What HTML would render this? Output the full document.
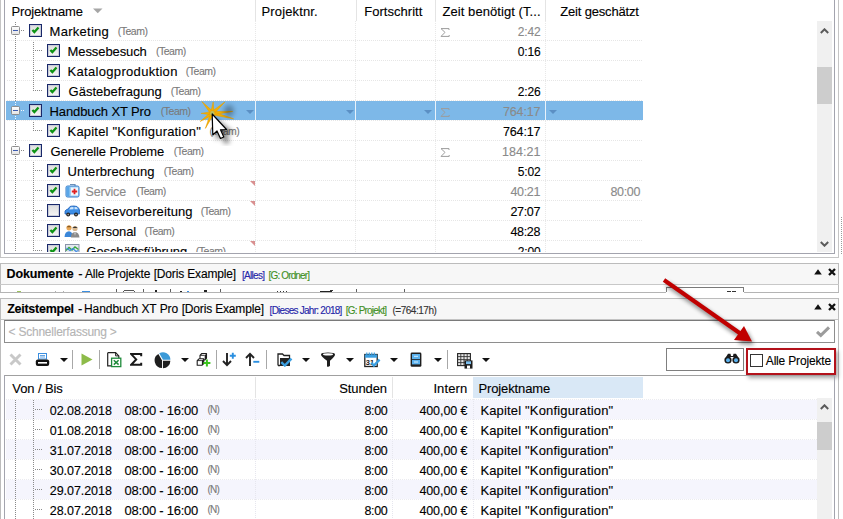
<!DOCTYPE html><html><head><meta charset="utf-8"><style>

html,body{margin:0;padding:0;background:#fff;}
body{width:843px;height:519px;overflow:hidden;position:relative;font-family:"Liberation Sans",sans-serif;}
.a{position:absolute;}
.t{position:absolute;white-space:pre;font-family:"Liberation Sans",sans-serif;color:#000;-webkit-text-stroke:0.12px currentColor;}
.cb{width:11px;height:11px;border:1px solid #19286a;background:linear-gradient(#dcdcdc,#f6f6f6);box-shadow:inset 0 0 0 1px #c9cdd8;}
.cb svg{left:-1px;top:-1px;}
.ex{width:7px;height:7px;border:1px solid #8e8e8e;border-radius:1.5px;background:linear-gradient(#fdfdfd,#e4e4e4);}

</style></head><body>
<div class="a" style="left:0;top:0;width:817px;height:252px;overflow:hidden">
<div class="a" style="left:255px;top:0px;width:1px;height:21px;background:#e4e4e4;"></div>
<div class="a" style="left:356px;top:0px;width:1px;height:21px;background:#e4e4e4;"></div>
<div class="a" style="left:435px;top:0px;width:1px;height:21px;background:#e4e4e4;"></div>
<div class="a" style="left:545px;top:0px;width:1px;height:21px;background:#e4e4e4;"></div>
<svg class="a" style="left:93px;top:8px" width="10" height="6" viewBox="0 0 10 6"><path d="M0 0.5 L9.5 0.5 L4.75 5.2 Z" fill="#a6a6a6"/></svg>
<div class="a" style="left:7px;top:40px;width:636px;height:1px;background:repeating-linear-gradient(to right,#e6e6e6 0 1px,transparent 1px 2px);"></div>
<div class="a" style="left:7px;top:60px;width:636px;height:1px;background:repeating-linear-gradient(to right,#e6e6e6 0 1px,transparent 1px 2px);"></div>
<div class="a" style="left:7px;top:80px;width:636px;height:1px;background:repeating-linear-gradient(to right,#e6e6e6 0 1px,transparent 1px 2px);"></div>
<div class="a" style="left:7px;top:100px;width:636px;height:1px;background:repeating-linear-gradient(to right,#e6e6e6 0 1px,transparent 1px 2px);"></div>
<div class="a" style="left:7px;top:120px;width:636px;height:1px;background:repeating-linear-gradient(to right,#e6e6e6 0 1px,transparent 1px 2px);"></div>
<div class="a" style="left:7px;top:140px;width:636px;height:1px;background:repeating-linear-gradient(to right,#e6e6e6 0 1px,transparent 1px 2px);"></div>
<div class="a" style="left:7px;top:160px;width:636px;height:1px;background:repeating-linear-gradient(to right,#e6e6e6 0 1px,transparent 1px 2px);"></div>
<div class="a" style="left:7px;top:180px;width:636px;height:1px;background:repeating-linear-gradient(to right,#e6e6e6 0 1px,transparent 1px 2px);"></div>
<div class="a" style="left:7px;top:200px;width:636px;height:1px;background:repeating-linear-gradient(to right,#e6e6e6 0 1px,transparent 1px 2px);"></div>
<div class="a" style="left:7px;top:220px;width:636px;height:1px;background:repeating-linear-gradient(to right,#e6e6e6 0 1px,transparent 1px 2px);"></div>
<div class="a" style="left:7px;top:240px;width:636px;height:1px;background:repeating-linear-gradient(to right,#e6e6e6 0 1px,transparent 1px 2px);"></div>
<div class="a" style="left:255px;top:21px;width:1px;height:232px;background:repeating-linear-gradient(to bottom,#e8e8e8 0 1px,transparent 1px 2px);"></div>
<div class="a" style="left:355px;top:21px;width:1px;height:232px;background:repeating-linear-gradient(to bottom,#e8e8e8 0 1px,transparent 1px 2px);"></div>
<div class="a" style="left:435px;top:21px;width:1px;height:232px;background:repeating-linear-gradient(to bottom,#e8e8e8 0 1px,transparent 1px 2px);"></div>
<div class="a" style="left:545px;top:21px;width:1px;height:232px;background:repeating-linear-gradient(to bottom,#e8e8e8 0 1px,transparent 1px 2px);"></div>
<div class="a" style="left:6px;top:101px;width:637px;height:19px;background:#7db8e8;"></div>
<div class="a" style="left:255px;top:101px;width:1px;height:19px;background:#e8f2fb;"></div>
<div class="a" style="left:355px;top:101px;width:1px;height:19px;background:#e8f2fb;"></div>
<div class="a" style="left:435px;top:101px;width:1px;height:19px;background:#e8f2fb;"></div>
<div class="a" style="left:545px;top:101px;width:1px;height:19px;background:#e8f2fb;"></div>
<svg class="a" style="left:246px;top:110px" width="8" height="5" viewBox="0 0 8 5"><path d="M0 0 L8 0 L4.0 4 Z" fill="#5b8fc4"/></svg>
<svg class="a" style="left:346px;top:110px" width="8" height="5" viewBox="0 0 8 5"><path d="M0 0 L8 0 L4.0 4 Z" fill="#5b8fc4"/></svg>
<svg class="a" style="left:424px;top:110px" width="8" height="5" viewBox="0 0 8 5"><path d="M0 0 L8 0 L4.0 4 Z" fill="#5b8fc4"/></svg>
<svg class="a" style="left:549px;top:110px" width="8" height="5" viewBox="0 0 8 5"><path d="M0 0 L8 0 L4.0 4 Z" fill="#5b8fc4"/></svg>
<div class="a" style="left:15px;top:22px;width:1px;height:231px;background:repeating-linear-gradient(to bottom,#8a8a8a 0 1px,transparent 1px 2px);"></div>
<div class="a" style="left:33px;top:42px;width:1px;height:49px;background:repeating-linear-gradient(to bottom,#8a8a8a 0 1px,transparent 1px 2px);"></div>
<div class="a" style="left:33px;top:122px;width:1px;height:9px;background:repeating-linear-gradient(to bottom,#8a8a8a 0 1px,transparent 1px 2px);"></div>
<div class="a" style="left:33px;top:162px;width:1px;height:91px;background:repeating-linear-gradient(to bottom,#8a8a8a 0 1px,transparent 1px 2px);"></div>
<div class="a" style="left:21px;top:30px;width:4px;height:1px;background:repeating-linear-gradient(to right,#8a8a8a 0 1px,transparent 1px 2px);"></div>
<div class="a ex" style="left:11px;top:26px;"><div class="a" style="left:1px;top:3px;width:5px;height:1px;background:#3d5cb0"></div></div>
<div class="a cb" style="left:29px;top:24px;"><svg width="13" height="13" viewBox="0 0 13 13" class="a"><path d="M3.4 5.9 L5.4 8.1 L9.5 3.6" fill="none" stroke="#0d9414" stroke-width="2.3" stroke-linecap="butt" stroke-linejoin="miter"/></svg></div>
<div class="a" style="left:35px;top:50px;width:8px;height:1px;background:repeating-linear-gradient(to right,#8a8a8a 0 1px,transparent 1px 2px);"></div>
<div class="a cb" style="left:47px;top:44px;"><svg width="13" height="13" viewBox="0 0 13 13" class="a"><path d="M3.4 5.9 L5.4 8.1 L9.5 3.6" fill="none" stroke="#0d9414" stroke-width="2.3" stroke-linecap="butt" stroke-linejoin="miter"/></svg></div>
<div class="a" style="left:35px;top:70px;width:8px;height:1px;background:repeating-linear-gradient(to right,#8a8a8a 0 1px,transparent 1px 2px);"></div>
<div class="a cb" style="left:47px;top:64px;"><svg width="13" height="13" viewBox="0 0 13 13" class="a"><path d="M3.4 5.9 L5.4 8.1 L9.5 3.6" fill="none" stroke="#0d9414" stroke-width="2.3" stroke-linecap="butt" stroke-linejoin="miter"/></svg></div>
<div class="a" style="left:35px;top:90px;width:8px;height:1px;background:repeating-linear-gradient(to right,#8a8a8a 0 1px,transparent 1px 2px);"></div>
<div class="a cb" style="left:47px;top:84px;"><svg width="13" height="13" viewBox="0 0 13 13" class="a"><path d="M3.4 5.9 L5.4 8.1 L9.5 3.6" fill="none" stroke="#0d9414" stroke-width="2.3" stroke-linecap="butt" stroke-linejoin="miter"/></svg></div>
<div class="a" style="left:21px;top:110px;width:4px;height:1px;background:repeating-linear-gradient(to right,#8a8a8a 0 1px,transparent 1px 2px);"></div>
<div class="a ex" style="left:11px;top:106px;"><div class="a" style="left:1px;top:3px;width:5px;height:1px;background:#3d5cb0"></div></div>
<div class="a cb" style="left:29px;top:104px;"><svg width="13" height="13" viewBox="0 0 13 13" class="a"><path d="M3.4 5.9 L5.4 8.1 L9.5 3.6" fill="none" stroke="#0d9414" stroke-width="2.3" stroke-linecap="butt" stroke-linejoin="miter"/></svg></div>
<div class="a" style="left:35px;top:130px;width:8px;height:1px;background:repeating-linear-gradient(to right,#8a8a8a 0 1px,transparent 1px 2px);"></div>
<div class="a cb" style="left:47px;top:124px;"><svg width="13" height="13" viewBox="0 0 13 13" class="a"><path d="M3.4 5.9 L5.4 8.1 L9.5 3.6" fill="none" stroke="#0d9414" stroke-width="2.3" stroke-linecap="butt" stroke-linejoin="miter"/></svg></div>
<div class="a" style="left:21px;top:150px;width:4px;height:1px;background:repeating-linear-gradient(to right,#8a8a8a 0 1px,transparent 1px 2px);"></div>
<div class="a ex" style="left:11px;top:146px;"><div class="a" style="left:1px;top:3px;width:5px;height:1px;background:#3d5cb0"></div></div>
<div class="a cb" style="left:29px;top:144px;"><svg width="13" height="13" viewBox="0 0 13 13" class="a"><path d="M3.4 5.9 L5.4 8.1 L9.5 3.6" fill="none" stroke="#0d9414" stroke-width="2.3" stroke-linecap="butt" stroke-linejoin="miter"/></svg></div>
<div class="a" style="left:35px;top:170px;width:8px;height:1px;background:repeating-linear-gradient(to right,#8a8a8a 0 1px,transparent 1px 2px);"></div>
<div class="a cb" style="left:47px;top:164px;"><svg width="13" height="13" viewBox="0 0 13 13" class="a"><path d="M3.4 5.9 L5.4 8.1 L9.5 3.6" fill="none" stroke="#0d9414" stroke-width="2.3" stroke-linecap="butt" stroke-linejoin="miter"/></svg></div>
<div class="a" style="left:35px;top:190px;width:8px;height:1px;background:repeating-linear-gradient(to right,#8a8a8a 0 1px,transparent 1px 2px);"></div>
<div class="a cb" style="left:47px;top:184px;"><svg width="13" height="13" viewBox="0 0 13 13" class="a"><path d="M3.4 5.9 L5.4 8.1 L9.5 3.6" fill="none" stroke="#0d9414" stroke-width="2.3" stroke-linecap="butt" stroke-linejoin="miter"/></svg></div>
<div class="a" style="left:35px;top:210px;width:8px;height:1px;background:repeating-linear-gradient(to right,#8a8a8a 0 1px,transparent 1px 2px);"></div>
<div class="a cb" style="left:47px;top:204px;"></div>
<div class="a" style="left:35px;top:230px;width:8px;height:1px;background:repeating-linear-gradient(to right,#8a8a8a 0 1px,transparent 1px 2px);"></div>
<div class="a cb" style="left:47px;top:224px;"><svg width="13" height="13" viewBox="0 0 13 13" class="a"><path d="M3.4 5.9 L5.4 8.1 L9.5 3.6" fill="none" stroke="#0d9414" stroke-width="2.3" stroke-linecap="butt" stroke-linejoin="miter"/></svg></div>
<div class="a" style="left:35px;top:250px;width:8px;height:1px;background:repeating-linear-gradient(to right,#8a8a8a 0 1px,transparent 1px 2px);"></div>
<div class="a cb" style="left:47px;top:244px;"><svg width="13" height="13" viewBox="0 0 13 13" class="a"><path d="M3.4 5.9 L5.4 8.1 L9.5 3.6" fill="none" stroke="#0d9414" stroke-width="2.3" stroke-linecap="butt" stroke-linejoin="miter"/></svg></div>
<div class="a" style="left:15px;top:102px;width:1px;height:4px;background:repeating-linear-gradient(to bottom,#f4f8fc 0 1px,transparent 1px 2px);"></div>
<div class="a" style="left:15px;top:116px;width:1px;height:4px;background:repeating-linear-gradient(to bottom,#f4f8fc 0 1px,transparent 1px 2px);"></div>
<div class="a" style="left:21px;top:110px;width:4px;height:1px;background:repeating-linear-gradient(to right,#f4f8fc 0 1px,transparent 1px 2px);"></div>
<svg class="a" style="left:440px;top:28px" width="10" height="9" viewBox="0 0 10 9"><path d="M9 2 V0.6 H1 L5 4.4 L1 8.4 H9.2 V7" fill="none" stroke="#9c9c9c" stroke-width="1"/></svg>
<svg class="a" style="left:440px;top:108px" width="10" height="9" viewBox="0 0 10 9"><path d="M9 2 V0.6 H1 L5 4.4 L1 8.4 H9.2 V7" fill="none" stroke="#9c9c9c" stroke-width="1"/></svg>
<svg class="a" style="left:440px;top:148px" width="10" height="9" viewBox="0 0 10 9"><path d="M9 2 V0.6 H1 L5 4.4 L1 8.4 H9.2 V7" fill="none" stroke="#9c9c9c" stroke-width="1"/></svg>
<svg class="a" style="left:250px;top:181px" width="5" height="5" viewBox="0 0 5 5"><path d="M0 0 L5 0 L5 5 Z" fill="#d99090"/></svg>
<svg class="a" style="left:250px;top:201px" width="5" height="5" viewBox="0 0 5 5"><path d="M0 0 L5 0 L5 5 Z" fill="#d99090"/></svg>
<svg class="a" style="left:250px;top:241px" width="5" height="5" viewBox="0 0 5 5"><path d="M0 0 L5 0 L5 5 Z" fill="#d99090"/></svg>
<svg class="a" style="left:65px;top:182px" width="16" height="16" viewBox="0 0 16 16">
<path d="M5 2.5 h5 v2" fill="none" stroke="#6a8fb8" stroke-width="1.2"/>
<rect x="1" y="4" width="13" height="11" rx="1.5" fill="#9fd0f4" stroke="#3b7cc8" stroke-width="1"/>
<rect x="1.5" y="4.5" width="3" height="10" fill="#5aa6e8"/>
<rect x="6" y="5.5" width="7" height="8" fill="#eef7ff"/>
<path d="M9.5 6.8 v5.4 M6.8 9.5 h5.4" stroke="#e02020" stroke-width="1.8"/>
</svg>
<svg class="a" style="left:64px;top:204px" width="16" height="14" viewBox="0 0 16 14">
<path d="M1 10 L1 7 Q2 5.5 4 5 L6 2.5 Q7 2 10 2 L13 2.5 Q15 4 15.5 6 L15.5 10 Z" fill="#3d8ee6" stroke="#1e5fb8" stroke-width="0.8"/>
<path d="M6.5 3.2 L9.5 3 L9.5 5.2 L5.2 5.4 Z M10.5 3 L12.8 3.3 L14 5.3 L10.5 5.3 Z" fill="#cfe6fb"/>
<circle cx="4.2" cy="10.6" r="2" fill="#222"/><circle cx="12" cy="10.6" r="2" fill="#222"/>
<circle cx="4.2" cy="10.6" r="0.8" fill="#aaa"/><circle cx="12" cy="10.6" r="0.8" fill="#aaa"/>
</svg>
<svg class="a" style="left:64px;top:224px" width="16" height="14" viewBox="0 0 16 14">
<circle cx="5" cy="3.8" r="2.6" fill="#e8a858"/><path d="M2.6 3.2 Q5 0.5 7.4 3.2" fill="#8a5a20"/>
<path d="M0.5 13 Q0.8 7.5 5 7.2 Q8.5 7.5 8.8 13 Z" fill="#3a86d8"/>
<circle cx="11" cy="4.5" r="2.6" fill="#d8b890"/><path d="M8.4 4 Q11 0.8 13.6 4" fill="#333"/>
<path d="M6.8 13.5 Q7 8.2 11 8 Q15 8.2 15.5 13.5 Z" fill="#8a8a8a"/><path d="M10.5 8.5 L11 12 L11.5 8.5Z" fill="#fff"/>
</svg>
<svg class="a" style="left:65px;top:244px" width="15" height="12" viewBox="0 0 15 12">
<rect x="0.5" y="0.5" width="13.5" height="11" fill="#e4e8f0" stroke="#8a94a8"/>
<path d="M1 6.5 L4 3.5 L7 6 L10 3 L13.5 5.5" fill="none" stroke="#38a838" stroke-width="1.4"/>
<path d="M1.5 4 L5 6.5 L8 4.5 L11 7.5 L13.5 6.5" fill="none" stroke="#3a88e0" stroke-width="1.1"/>
</svg>
<div class="t" style="left:11.50px;top:5px;font-size:13px;line-height:13px;letter-spacing:-0.150px;">Projektname</div>
<div class="t" style="left:261.50px;top:5px;font-size:13px;line-height:13px;letter-spacing:0.144px;">Projektnr.</div>
<div class="t" style="left:364.20px;top:5px;font-size:13px;line-height:13px;letter-spacing:0.040px;">Fortschritt</div>
<div class="t" style="left:442.50px;top:5px;font-size:13px;line-height:13px;letter-spacing:0.067px;">Zeit benötigt (T...</div>
<div class="t" style="left:560.20px;top:5px;font-size:13px;line-height:13px;letter-spacing:-0.169px;">Zeit geschätzt</div>
<div class="t" style="left:49.60px;top:25px;font-size:13px;line-height:13px;letter-spacing:0.263px;">Marketing</div>
<div class="t" style="left:117.70px;top:26px;font-size:10.5px;line-height:10.5px;letter-spacing:-0.480px;color:#7a7a7a;">(Team)</div>
<div class="t" style="left:67.60px;top:45px;font-size:13px;line-height:13px;letter-spacing:-0.100px;">Messebesuch</div>
<div class="t" style="left:155.90px;top:46px;font-size:10.5px;line-height:10.5px;letter-spacing:-0.480px;color:#7a7a7a;">(Team)</div>
<div class="t" style="left:67.60px;top:65px;font-size:13px;line-height:13px;letter-spacing:0.312px;">Katalogproduktion</div>
<div class="t" style="left:185.80px;top:66px;font-size:10.5px;line-height:10.5px;letter-spacing:-0.480px;color:#7a7a7a;">(Team)</div>
<div class="t" style="left:68.60px;top:85px;font-size:13px;line-height:13px;">Gästebefragung</div>
<div class="t" style="left:170.80px;top:86px;font-size:10.5px;line-height:10.5px;letter-spacing:-0.480px;color:#7a7a7a;">(Team)</div>
<div class="t" style="left:49.60px;top:105px;font-size:13px;line-height:13px;letter-spacing:-0.121px;">Handbuch XT Pro</div>
<div class="t" style="left:160.80px;top:106px;font-size:10.5px;line-height:10.5px;letter-spacing:-0.480px;color:#7a7a7a;">(Team)</div>
<div class="t" style="left:67.60px;top:125px;font-size:13px;line-height:13px;letter-spacing:0.186px;">Kapitel "Konfiguration"</div>
<div class="t" style="left:209.60px;top:126px;font-size:10.5px;line-height:10.5px;letter-spacing:-0.480px;color:#7a7a7a;">(Team)</div>
<div class="t" style="left:50.60px;top:145px;font-size:13px;line-height:13px;letter-spacing:-0.118px;">Generelle Probleme</div>
<div class="t" style="left:173.80px;top:146px;font-size:10.5px;line-height:10.5px;letter-spacing:-0.480px;color:#7a7a7a;">(Team)</div>
<div class="t" style="left:67.60px;top:165px;font-size:13px;line-height:13px;letter-spacing:0.083px;">Unterbrechung</div>
<div class="t" style="left:163.80px;top:166px;font-size:10.5px;line-height:10.5px;letter-spacing:-0.480px;color:#7a7a7a;">(Team)</div>
<div class="t" style="left:85.50px;top:186px;font-size:12.5px;line-height:12.5px;letter-spacing:-0.183px;color:#8a8a8a;">Service</div>
<div class="t" style="left:135.90px;top:186px;font-size:10.5px;line-height:10.5px;letter-spacing:-0.480px;color:#7a7a7a;">(Team)</div>
<div class="t" style="left:85.50px;top:205px;font-size:13px;line-height:13px;letter-spacing:0.094px;">Reisevorbereitung</div>
<div class="t" style="left:200.70px;top:206px;font-size:10.5px;line-height:10.5px;letter-spacing:-0.480px;color:#7a7a7a;">(Team)</div>
<div class="t" style="left:85.50px;top:225px;font-size:13px;line-height:13px;letter-spacing:-0.086px;">Personal</div>
<div class="t" style="left:144.60px;top:226px;font-size:10.5px;line-height:10.5px;letter-spacing:-0.480px;color:#7a7a7a;">(Team)</div>
<div class="t" style="left:86.50px;top:245px;font-size:13px;line-height:13px;letter-spacing:-0.133px;">Geschäftsführung</div>
<div class="t" style="left:195.80px;top:246px;font-size:10.5px;line-height:10.5px;letter-spacing:-0.480px;color:#7a7a7a;">(Team)</div>
<div class="t" style="left:517.80px;top:26px;font-size:12px;line-height:12px;letter-spacing:-0.200px;color:#8a8a8a;">2:42</div>
<div class="t" style="left:517.80px;top:46px;font-size:12px;line-height:12px;letter-spacing:-0.200px;">0:16</div>
<div class="t" style="left:517.80px;top:86px;font-size:12px;line-height:12px;letter-spacing:-0.200px;">2:26</div>
<div class="t" style="left:503.00px;top:106px;font-size:12.5px;line-height:12.5px;letter-spacing:-0.160px;color:#8a8a8a;">764:17</div>
<div class="t" style="left:503.00px;top:126px;font-size:12.5px;line-height:12.5px;letter-spacing:-0.160px;">764:17</div>
<div class="t" style="left:502.00px;top:146px;font-size:12.5px;line-height:12.5px;letter-spacing:0.040px;color:#8a8a8a;">184:21</div>
<div class="t" style="left:517.80px;top:166px;font-size:12px;line-height:12px;letter-spacing:-0.200px;">5:02</div>
<div class="t" style="left:510.40px;top:186px;font-size:12.5px;line-height:12.5px;letter-spacing:-0.300px;color:#8a8a8a;">40:21</div>
<div class="t" style="left:510.40px;top:206px;font-size:12.5px;line-height:12.5px;letter-spacing:-0.300px;">27:07</div>
<div class="t" style="left:510.40px;top:226px;font-size:12.5px;line-height:12.5px;letter-spacing:-0.300px;">48:28</div>
<div class="t" style="left:517.80px;top:246px;font-size:12px;line-height:12px;letter-spacing:-0.200px;">2:00</div>
<div class="t" style="left:610.40px;top:186px;font-size:12.5px;line-height:12.5px;letter-spacing:-0.300px;color:#8a8a8a;">80:00</div>
</div>
<div class="a" style="left:0px;top:0px;width:1px;height:258px;background:#c5c5c5;"></div>
<div class="a" style="left:838px;top:0px;width:1px;height:258px;background:#c5c5c5;"></div>
<div class="a" style="left:0px;top:257px;width:839px;height:1px;background:#c5c5c5;"></div>
<div class="a" style="left:4px;top:0px;width:1px;height:254px;background:#a3a4ae;"></div>
<div class="a" style="left:834px;top:0px;width:1px;height:254px;background:#a3a4ae;"></div>
<div class="a" style="left:4px;top:253px;width:831px;height:1px;background:#a3a4ae;"></div>
<div class="a" style="left:817px;top:21px;width:15px;height:231px;background:#f0f0f0;"></div>
<div class="a" style="left:817px;top:67px;width:15px;height:37px;background:#cdcdcd;"></div>
<svg class="a" style="left:820px;top:28px" width="9" height="6" viewBox="0 0 9 6"><path d="M0.8 5 L4.5 1.3 L8.2 5" fill="none" stroke="#5a5a5a" stroke-width="2"/></svg>
<svg class="a" style="left:820px;top:241px" width="9" height="6" viewBox="0 0 9 6"><path d="M0.8 1 L4.5 4.7 L8.2 1" fill="none" stroke="#5a5a5a" stroke-width="2"/></svg>
<div class="a" style="left:841px;top:217px;width:1px;height:37px;background:repeating-linear-gradient(to bottom,#9a9a9a 0 1px,transparent 1px 2px);"></div>
<div class="a" style="left:0px;top:263px;width:839px;height:1px;background:#bcbcbc;"></div>
<div class="a" style="left:0px;top:263px;width:1px;height:30px;background:#bcbcbc;"></div>
<div class="a" style="left:838px;top:263px;width:1px;height:30px;background:#bcbcbc;"></div>
<div class="a" style="left:1px;top:264px;width:837px;height:20px;background:#f7f7f7;"></div>
<div class="a" style="left:0px;top:284px;width:839px;height:1px;background:#c8c8c8;"></div>
<div class="a" style="left:0px;top:292px;width:666px;height:1px;background:#b4b4b4;"></div>
<div class="a" style="left:744px;top:292px;width:95px;height:1px;background:#b4b4b4;"></div>
<div class="a" style="left:17px;top:291px;width:4px;height:1px;background:#9cc45a;"></div>
<div class="a" style="left:55px;top:291px;width:1px;height:1px;background:#b0b0b0;"></div>
<div class="a" style="left:63px;top:291px;width:1px;height:1px;background:#b0b0b0;"></div>
<div class="a" style="left:82px;top:291px;width:8px;height:1px;background:#3a8ee0;"></div>
<div class="a" style="left:124px;top:290px;width:10px;height:1px;background:#555;"></div>
<div class="a" style="left:123px;top:291px;width:1px;height:1px;background:#555;"></div>
<div class="a" style="left:134px;top:291px;width:1px;height:1px;background:#555;"></div>
<div class="a" style="left:155px;top:290px;width:2px;height:2px;background:#222;"></div>
<div class="a" style="left:180px;top:291px;width:2px;height:1px;background:#222;"></div>
<div class="a" style="left:187px;top:291px;width:2px;height:1px;background:#3a8ee0;"></div>
<div class="a" style="left:204px;top:290px;width:3px;height:2px;background:#222;"></div>
<div class="a" style="left:277px;top:291px;width:1px;height:1px;background:#333;"></div>
<div class="a" style="left:280px;top:291px;width:1px;height:1px;background:#333;"></div>
<div class="a" style="left:283px;top:291px;width:1px;height:1px;background:#333;"></div>
<div class="a" style="left:286px;top:291px;width:1px;height:1px;background:#333;"></div>
<div class="a" style="left:320px;top:291px;width:12px;height:1px;background:#222;"></div>
<div class="a" style="left:330px;top:290px;width:3px;height:1px;background:#333;"></div>
<div class="a" style="left:116px;top:289px;width:1px;height:3px;background:#606060;"></div>
<div class="a" style="left:143px;top:289px;width:1px;height:3px;background:#606060;"></div>
<div class="a" style="left:170px;top:289px;width:1px;height:3px;background:#606060;"></div>
<div class="a" style="left:220px;top:289px;width:1px;height:3px;background:#606060;"></div>
<div class="a" style="left:356px;top:289px;width:1px;height:3px;background:#606060;"></div>
<div class="a" style="left:404px;top:289px;width:1px;height:3px;background:#606060;"></div>
<div class="a" style="left:666px;top:287px;width:78px;height:1px;background:#7a7a7a;"></div>
<div class="a" style="left:666px;top:287px;width:1px;height:5px;background:#7a7a7a;"></div>
<div class="a" style="left:743px;top:287px;width:1px;height:5px;background:#7a7a7a;"></div>
<div class="a" style="left:727px;top:291px;width:4px;height:1px;background:#333;"></div>
<div class="a" style="left:732px;top:291px;width:4px;height:1px;background:#333;"></div>
<svg class="a" style="left:814px;top:269px" width="8" height="6" viewBox="0 0 8 6"><path d="M0.2 5.6 L4 0.2 L7.8 5.6 Z" fill="#111"/></svg>
<svg class="a" style="left:828px;top:268px" width="8" height="8" viewBox="0 0 8 8"><path d="M1 1 L7 7 M7 1 L1 7" stroke="#111" stroke-width="2.3"/></svg>
<div class="a" style="left:0px;top:298px;width:839px;height:1px;background:#bcbcbc;"></div>
<div class="a" style="left:0px;top:298px;width:1px;height:221px;background:#bcbcbc;"></div>
<div class="a" style="left:838px;top:298px;width:1px;height:221px;background:#bcbcbc;"></div>
<div class="a" style="left:1px;top:299px;width:837px;height:20px;background:#f7f7f7;"></div>
<div class="a" style="left:1px;top:319px;width:837px;height:1px;background:#c4c4c4;"></div>
<svg class="a" style="left:814px;top:304px" width="8" height="6" viewBox="0 0 8 6"><path d="M0.2 5.6 L4 0.2 L7.8 5.6 Z" fill="#111"/></svg>
<svg class="a" style="left:828px;top:303px" width="8" height="8" viewBox="0 0 8 8"><path d="M1 1 L7 7 M7 1 L1 7" stroke="#111" stroke-width="2.3"/></svg>
<div class="a" style="left:4px;top:320px;width:829px;height:21px;border:1px solid #8e8e8e;border-top-color:#7a7a7a;background:#fff"></div>
<svg class="a" style="left:815px;top:325px" width="16" height="13" viewBox="0 0 16 13"><path d="M2 6.8 L5.8 10.4 L14 2.4" fill="none" stroke="#9c9c9c" stroke-width="3"/></svg>
<svg class="a" style="left:9px;top:353px" width="13" height="13" viewBox="0 0 13 13"><path d="M1.5 1.5 L11.5 11.5 M11.5 1.5 L1.5 11.5" stroke="#c8c8c8" stroke-width="2.9"/></svg>
<svg class="a" style="left:35px;top:352px" width="15" height="15" viewBox="0 0 15 15">
<rect x="3.5" y="1.5" width="8" height="5.5" fill="#fff" stroke="#3a8ee0" stroke-width="1"/><path d="M5 3.5 h5 M5 5 h5" stroke="#3a8ee0" stroke-width="0.8"/>
<rect x="0.8" y="7.5" width="13.4" height="6.5" rx="2" fill="#111"/><rect x="3" y="10" width="9" height="1.6" fill="#fff"/>
</svg>
<svg class="a" style="left:60px;top:358px" width="8" height="5" viewBox="0 0 8 5"><path d="M0 0 L8 0 L4.0 4 Z" fill="#111"/></svg>
<div class="a" style="left:72px;top:350px;width:1px;height:19px;background:#a8a8a8;"></div>
<svg class="a" style="left:81px;top:353px" width="12" height="13" viewBox="0 0 12 13"><path d="M0.5 0.5 L11.5 6.5 L0.5 12.5 Z" fill="#8dbb49"/></svg>
<div class="a" style="left:99px;top:350px;width:1px;height:19px;background:#a8a8a8;"></div>
<svg class="a" style="left:107px;top:352px" width="15" height="16" viewBox="0 0 15 16">
<path d="M0.7 0.7 H8.6 L11.8 3.9 V6.2 M0.7 0.7 V13.8 H4.6" fill="none" stroke="#222" stroke-width="1.2"/><path d="M8.6 0.7 V3.9 H11.8" fill="none" stroke="#222" stroke-width="1"/>
<rect x="4.6" y="6.2" width="9.2" height="8.4" fill="#fff" stroke="#1e8a3a" stroke-width="1.3"/><path d="M6.8 8.2 L11.6 12.6 M11.6 8.2 L6.8 12.6" stroke="#1e8a3a" stroke-width="1.5"/>
</svg>
<svg class="a" style="left:130px;top:353px" width="13" height="13" viewBox="0 0 13 13"><path d="M11.2 3.2 V1.1 H1.2 L6.2 6.4 L1.2 11.8 H11.2 V9.7" fill="none" stroke="#1a1a1a" stroke-width="2" stroke-linejoin="miter"/></svg>
<svg class="a" style="left:154px;top:352px" width="18" height="18" viewBox="0 0 18 18"><path d="M8.97 7.70 L5.27 1.29 A7.4 7.4 0 0 1 16.38 7.70 Z" fill="#3b9ad8"/><path d="M8.99 8.74 L16.39 8.74 A7.4 7.4 0 0 1 8.99 16.14 Z" fill="#1e1e1e"/><path d="M8.07 8.49 L8.07 15.89 A7.4 7.4 0 0 1 4.37 2.08 Z" fill="#1e1e1e"/></svg>
<svg class="a" style="left:181px;top:358px" width="8" height="5" viewBox="0 0 8 5"><path d="M0 0 L8 0 L4.0 4 Z" fill="#111"/></svg>
<svg class="a" style="left:196px;top:352px" width="16" height="16" viewBox="0 0 16 16"><path d="M5.8 1.5 H10.5 V6.2 L8.7 8.0 H4 V3.3 Z" fill="#fff" stroke="#1e1e1e" stroke-width="1.1" stroke-linejoin="round"/><path d="M8.7 3.3 L10.5 1.5 V6.2 L8.7 8.0 Z" fill="#1e1e1e"/><path d="M4 3.3 H8.7" stroke="#1e1e1e" stroke-width="0.9"/><path d="M3.0 6.8 H7.7 V11.5 L5.9 13.3 H1.2 V8.6 Z" fill="#fff" stroke="#1e1e1e" stroke-width="1.1" stroke-linejoin="round"/><path d="M5.9 8.6 L7.7 6.8 V11.5 L5.9 13.3 Z" fill="#1e1e1e"/><path d="M1.2 8.6 H5.9" stroke="#1e1e1e" stroke-width="0.9"/><path d="M10.9 7.6 V14.6 M7.4 11.1 H14.4" stroke="#3cc41e" stroke-width="2"/></svg>
<div class="a" style="left:216px;top:350px;width:1px;height:19px;background:#a8a8a8;"></div>
<svg class="a" style="left:222px;top:352px" width="15" height="15" viewBox="0 0 15 15">
<path d="M5 1 V13 M1 9 L5 13.2 L9 9" fill="none" stroke="#222" stroke-width="1.9"/><path d="M10.8 0.8 V6.8 M7.8 3.8 H13.8" stroke="#2b8fe0" stroke-width="1.9"/>
</svg>
<svg class="a" style="left:245px;top:352px" width="15" height="15" viewBox="0 0 15 15">
<path d="M5 14 V2 M1 6 L5 1.8 L9 6" fill="none" stroke="#222" stroke-width="1.9"/><path d="M8.3 9.8 H14.3" stroke="#2b8fe0" stroke-width="1.9"/>
</svg>
<div class="a" style="left:266px;top:350px;width:1px;height:19px;background:#a8a8a8;"></div>
<svg class="a" style="left:277px;top:353px" width="16" height="14" viewBox="0 0 16 14">
<path d="M1 12.5 V1 H5.5 L7 2.5 H12.5 V5" fill="none" stroke="#222" stroke-width="1.3"/><path d="M1 12.5 H3" stroke="#222" stroke-width="1.3"/>
<rect x="3" y="5" width="10" height="8" fill="#222"/>
<path d="M4.3 9.2 L7.8 12.5 L14.5 5.6" fill="none" stroke="#3a9ee0" stroke-width="2.4"/>
</svg>
<svg class="a" style="left:302px;top:358px" width="8" height="5" viewBox="0 0 8 5"><path d="M0 0 L8 0 L4.0 4 Z" fill="#111"/></svg>
<svg class="a" style="left:320px;top:352px" width="16" height="16" viewBox="0 0 16 16">
<path d="M1 2.5 Q1 0.6 8 0.6 Q15 0.6 15 2.5 Q15 4.5 10 8.8 V13.8 Q8.5 15.2 7 14.4 V8.8 Q1 4.5 1 2.5 Z" fill="#1e1e1e"/>
<ellipse cx="8" cy="2.4" rx="5" ry="1.1" fill="#fff"/>
</svg>
<svg class="a" style="left:346px;top:358px" width="8" height="5" viewBox="0 0 8 5"><path d="M0 0 L8 0 L4.0 4 Z" fill="#111"/></svg>
<svg class="a" style="left:364px;top:352px" width="17" height="16" viewBox="0 0 17 16">
<rect x="0.8" y="2.5" width="12.4" height="12" fill="#fff" stroke="#222" stroke-width="1.3"/>
<rect x="0.8" y="2.5" width="12.4" height="3.2" fill="#3a9ee0"/>
<path d="M2.8 0.5 V3 M5.3 0.5 V3 M7.8 0.5 V3 M10.3 0.5 V3" stroke="#3a9ee0" stroke-width="1.1"/>
<text x="1.8" y="13" font-family="Liberation Sans" font-size="7.5" font-weight="700" fill="#1a1a1a">31</text>
<path d="M7.2 10.8 L9.9 13.6 L15.6 7.6" fill="none" stroke="#3a9ee0" stroke-width="2.3"/>
</svg>
<svg class="a" style="left:390px;top:358px" width="8" height="5" viewBox="0 0 8 5"><path d="M0 0 L8 0 L4.0 4 Z" fill="#111"/></svg>
<svg class="a" style="left:410px;top:352px" width="12" height="16" viewBox="0 0 12 16">
<rect x="0.6" y="0.6" width="10.8" height="14.2" rx="1.4" fill="#1e1e1e"/>
<rect x="2" y="2" width="8" height="5" fill="#5ab0ec"/><rect x="2" y="7.8" width="8" height="4.6" fill="#5ab0ec"/>
<path d="M4 4.3 H8 M4 10 H8" stroke="#d8eefc" stroke-width="1"/>
</svg>
<svg class="a" style="left:434px;top:358px" width="8" height="5" viewBox="0 0 8 5"><path d="M0 0 L8 0 L4.0 4 Z" fill="#111"/></svg>
<div class="a" style="left:447px;top:350px;width:1px;height:19px;background:#a8a8a8;"></div>
<svg class="a" style="left:457px;top:353px" width="16" height="16" viewBox="0 0 16 16">
<rect x="0.6" y="0.6" width="12.8" height="12" fill="#e8e8e8" stroke="#222" stroke-width="1.1"/>
<path d="M3.8 0.6 V12.6 M7 0.6 V12.6 M10.2 0.6 V12.6 M0.6 3.6 H13.4 M0.6 6.6 H13.4 M0.6 9.6 H13.4" stroke="#333" stroke-width="0.9"/>
<rect x="7.5" y="7.4" width="8" height="8.2" fill="#1e1e1e"/><rect x="9" y="8.3" width="5" height="2.8" fill="#7cc0f0"/><rect x="10" y="12.6" width="3" height="3" fill="#fff"/>
</svg>
<svg class="a" style="left:482px;top:358px" width="8" height="5" viewBox="0 0 8 5"><path d="M0 0 L8 0 L4.0 4 Z" fill="#111"/></svg>
<div class="a" style="left:666px;top:348px;width:76px;height:21px;border:1px solid #7f7f7f;background:#fff"></div>
<svg class="a" style="left:724px;top:353px" width="16" height="11" viewBox="0 0 16 11">
<path d="M2 4 L4 0.8 H6.5 L7 3 H9 L9.5 0.8 H12 L14 4 Z" fill="#1a1a1a"/>
<circle cx="4" cy="7" r="3.6" fill="#1a1a1a"/><circle cx="12" cy="7" r="3.6" fill="#1a1a1a"/>
<circle cx="4" cy="7.3" r="2" fill="#5ab0ec"/><circle cx="12" cy="7.3" r="2" fill="#5ab0ec"/>
</svg>
<div class="a" style="left:746px;top:348px;width:86px;height:23px;border:2px solid #b3121b;box-shadow:2px 3px 4px rgba(0,0,0,0.35)"></div>
<div class="a" style="left:750px;top:354px;width:11px;height:11px;border:1px solid #333;background:#fff"></div>
<div class="a" style="left:4px;top:375px;width:831px;height:1px;background:#a0a0a0;"></div>
<div class="a" style="left:4px;top:375px;width:1px;height:144px;background:#a3a4ae;"></div>
<div class="a" style="left:834px;top:375px;width:1px;height:144px;background:#a3a4ae;"></div>
<div class="a" style="left:255px;top:377px;width:1px;height:21px;background:#e4e4e4;"></div>
<div class="a" style="left:392px;top:377px;width:1px;height:21px;background:#e4e4e4;"></div>
<div class="a" style="left:473px;top:377px;width:170px;height:21px;background:#d9e8f6;"></div>
<div class="a" style="left:6px;top:400px;width:811px;height:19px;background:#f5f5fd;"></div>
<div class="a" style="left:6px;top:399px;width:811px;height:1px;background:repeating-linear-gradient(to right,#ebebf0 0 1px,transparent 1px 2px);"></div>
<div class="a" style="left:35px;top:409px;width:7px;height:1px;background:repeating-linear-gradient(to right,#8a8a8a 0 1px,transparent 1px 2px);"></div>
<div class="a" style="left:6px;top:419px;width:811px;height:1px;background:repeating-linear-gradient(to right,#ebebf0 0 1px,transparent 1px 2px);"></div>
<div class="a" style="left:35px;top:429px;width:7px;height:1px;background:repeating-linear-gradient(to right,#8a8a8a 0 1px,transparent 1px 2px);"></div>
<div class="a" style="left:6px;top:440px;width:811px;height:19px;background:#f5f5fd;"></div>
<div class="a" style="left:6px;top:439px;width:811px;height:1px;background:repeating-linear-gradient(to right,#ebebf0 0 1px,transparent 1px 2px);"></div>
<div class="a" style="left:35px;top:449px;width:7px;height:1px;background:repeating-linear-gradient(to right,#8a8a8a 0 1px,transparent 1px 2px);"></div>
<div class="a" style="left:6px;top:459px;width:811px;height:1px;background:repeating-linear-gradient(to right,#ebebf0 0 1px,transparent 1px 2px);"></div>
<div class="a" style="left:35px;top:469px;width:7px;height:1px;background:repeating-linear-gradient(to right,#8a8a8a 0 1px,transparent 1px 2px);"></div>
<div class="a" style="left:6px;top:480px;width:811px;height:19px;background:#f5f5fd;"></div>
<div class="a" style="left:6px;top:479px;width:811px;height:1px;background:repeating-linear-gradient(to right,#ebebf0 0 1px,transparent 1px 2px);"></div>
<div class="a" style="left:35px;top:489px;width:7px;height:1px;background:repeating-linear-gradient(to right,#8a8a8a 0 1px,transparent 1px 2px);"></div>
<div class="a" style="left:6px;top:499px;width:811px;height:1px;background:repeating-linear-gradient(to right,#ebebf0 0 1px,transparent 1px 2px);"></div>
<div class="a" style="left:35px;top:509px;width:7px;height:1px;background:repeating-linear-gradient(to right,#8a8a8a 0 1px,transparent 1px 2px);"></div>
<div class="a" style="left:15px;top:400px;width:1px;height:119px;background:repeating-linear-gradient(to bottom,#8a8a8a 0 1px,transparent 1px 2px);"></div>
<div class="a" style="left:33px;top:400px;width:1px;height:119px;background:repeating-linear-gradient(to bottom,#8a8a8a 0 1px,transparent 1px 2px);"></div>
<div class="a" style="left:255px;top:399px;width:1px;height:120px;background:repeating-linear-gradient(to bottom,#e6e6ee 0 1px,transparent 1px 2px);"></div>
<div class="a" style="left:392px;top:399px;width:1px;height:120px;background:repeating-linear-gradient(to bottom,#e6e6ee 0 1px,transparent 1px 2px);"></div>
<div class="a" style="left:473px;top:399px;width:1px;height:120px;background:repeating-linear-gradient(to bottom,#e6e6ee 0 1px,transparent 1px 2px);"></div>
<div class="a" style="left:817px;top:398px;width:15px;height:121px;background:#f0f0f0;"></div>
<div class="a" style="left:817px;top:422px;width:15px;height:28px;background:#cdcdcd;"></div>
<svg class="a" style="left:820px;top:404px" width="9" height="6" viewBox="0 0 9 6"><path d="M0.8 5 L4.5 1.3 L8.2 5" fill="none" stroke="#5a5a5a" stroke-width="2"/></svg>
<div class="t" style="left:6.60px;top:268px;font-size:12.5px;line-height:12.5px;font-weight:700;letter-spacing:-0.125px;">Dokumente</div>
<div class="t" style="left:78.20px;top:267px;font-size:13px;line-height:13px;">-</div>
<div class="t" style="left:85.00px;top:268px;font-size:12px;line-height:12px;letter-spacing:-0.167px;">Alle Projekte</div>
<div class="t" style="left:153.70px;top:268px;font-size:12px;line-height:12px;letter-spacing:-0.164px;">[Doris Example]</div>
<div class="t" style="left:242.00px;top:271px;font-size:10px;line-height:10px;letter-spacing:-0.700px;color:#2424a8;">[Alles]</div>
<div class="t" style="left:268.60px;top:271px;font-size:10px;line-height:10px;letter-spacing:-0.860px;color:#3f8f1f;">[G: Ordner]</div>
<div class="t" style="left:7.20px;top:303px;font-size:12.5px;line-height:12.5px;font-weight:700;letter-spacing:-0.260px;">Zeitstempel</div>
<div class="t" style="left:78.00px;top:302px;font-size:13px;line-height:13px;">-</div>
<div class="t" style="left:84.00px;top:303px;font-size:12px;line-height:12px;letter-spacing:-0.071px;">Handbuch XT Pro</div>
<div class="t" style="left:181.70px;top:303px;font-size:12px;line-height:12px;letter-spacing:-0.171px;">[Doris Example]</div>
<div class="t" style="left:269.60px;top:306px;font-size:10px;line-height:10px;letter-spacing:-0.744px;color:#2424a8;">[Dieses Jahr: 2018]</div>
<div class="t" style="left:345.80px;top:306px;font-size:10px;line-height:10px;letter-spacing:-0.800px;color:#3f8f1f;">[G: Projekt]</div>
<div class="t" style="left:392.40px;top:306px;font-size:10px;line-height:10px;letter-spacing:-0.467px;color:#333;">(=764:17h)</div>
<div class="t" style="left:8.60px;top:326px;font-size:12px;line-height:12px;letter-spacing:-0.237px;color:#b4b4b4;">&lt; Schnellerfassung &gt;</div>
<div class="t" style="left:765.80px;top:355px;font-size:12px;line-height:12px;letter-spacing:-0.175px;">Alle Projekte</div>
<div class="t" style="left:12.30px;top:382px;font-size:13px;line-height:13px;letter-spacing:-0.100px;">Von / Bis</div>
<div class="t" style="left:339.20px;top:382px;font-size:13px;line-height:13px;letter-spacing:-0.100px;">Stunden</div>
<div class="t" style="left:433.40px;top:382px;font-size:13px;line-height:13px;letter-spacing:0.100px;">Intern</div>
<div class="t" style="left:478.50px;top:382px;font-size:13px;line-height:13px;letter-spacing:-0.130px;">Projektname</div>
<div class="t" style="left:49.80px;top:405px;font-size:12.5px;line-height:12.5px;letter-spacing:-0.056px;">02.08.2018</div>
<div class="t" style="left:124.60px;top:404px;font-size:13px;line-height:13px;letter-spacing:-0.242px;">08:00 - 16:00</div>
<div class="t" style="left:207.60px;top:405px;font-size:10px;line-height:10px;letter-spacing:-0.850px;color:#7a7a7a;">(N)</div>
<div class="t" style="left:364.40px;top:405px;font-size:12.5px;line-height:12.5px;letter-spacing:-0.300px;">8:00</div>
<div class="t" style="left:419.40px;top:405px;font-size:12.5px;line-height:12.5px;letter-spacing:-0.086px;">400,00 €</div>
<div class="t" style="left:480.40px;top:404px;font-size:13px;line-height:13px;letter-spacing:0.164px;">Kapitel "Konfiguration"</div>
<div class="t" style="left:49.80px;top:425px;font-size:12.5px;line-height:12.5px;letter-spacing:-0.056px;">01.08.2018</div>
<div class="t" style="left:124.60px;top:424px;font-size:13px;line-height:13px;letter-spacing:-0.242px;">08:00 - 16:00</div>
<div class="t" style="left:207.60px;top:425px;font-size:10px;line-height:10px;letter-spacing:-0.850px;color:#7a7a7a;">(N)</div>
<div class="t" style="left:364.40px;top:425px;font-size:12.5px;line-height:12.5px;letter-spacing:-0.300px;">8:00</div>
<div class="t" style="left:419.40px;top:425px;font-size:12.5px;line-height:12.5px;letter-spacing:-0.086px;">400,00 €</div>
<div class="t" style="left:480.40px;top:424px;font-size:13px;line-height:13px;letter-spacing:0.164px;">Kapitel "Konfiguration"</div>
<div class="t" style="left:49.80px;top:445px;font-size:12.5px;line-height:12.5px;letter-spacing:-0.056px;">31.07.2018</div>
<div class="t" style="left:124.60px;top:444px;font-size:13px;line-height:13px;letter-spacing:-0.242px;">08:00 - 16:00</div>
<div class="t" style="left:207.60px;top:445px;font-size:10px;line-height:10px;letter-spacing:-0.850px;color:#7a7a7a;">(N)</div>
<div class="t" style="left:364.40px;top:445px;font-size:12.5px;line-height:12.5px;letter-spacing:-0.300px;">8:00</div>
<div class="t" style="left:419.40px;top:445px;font-size:12.5px;line-height:12.5px;letter-spacing:-0.086px;">400,00 €</div>
<div class="t" style="left:480.40px;top:444px;font-size:13px;line-height:13px;letter-spacing:0.164px;">Kapitel "Konfiguration"</div>
<div class="t" style="left:49.80px;top:465px;font-size:12.5px;line-height:12.5px;letter-spacing:-0.056px;">30.07.2018</div>
<div class="t" style="left:124.60px;top:464px;font-size:13px;line-height:13px;letter-spacing:-0.242px;">08:00 - 16:00</div>
<div class="t" style="left:207.60px;top:465px;font-size:10px;line-height:10px;letter-spacing:-0.850px;color:#7a7a7a;">(N)</div>
<div class="t" style="left:364.40px;top:465px;font-size:12.5px;line-height:12.5px;letter-spacing:-0.300px;">8:00</div>
<div class="t" style="left:419.40px;top:465px;font-size:12.5px;line-height:12.5px;letter-spacing:-0.086px;">400,00 €</div>
<div class="t" style="left:480.40px;top:464px;font-size:13px;line-height:13px;letter-spacing:0.164px;">Kapitel "Konfiguration"</div>
<div class="t" style="left:49.80px;top:485px;font-size:12.5px;line-height:12.5px;letter-spacing:-0.056px;">29.07.2018</div>
<div class="t" style="left:124.60px;top:484px;font-size:13px;line-height:13px;letter-spacing:-0.242px;">08:00 - 16:00</div>
<div class="t" style="left:207.60px;top:485px;font-size:10px;line-height:10px;letter-spacing:-0.850px;color:#7a7a7a;">(N)</div>
<div class="t" style="left:364.40px;top:485px;font-size:12.5px;line-height:12.5px;letter-spacing:-0.300px;">8:00</div>
<div class="t" style="left:419.40px;top:485px;font-size:12.5px;line-height:12.5px;letter-spacing:-0.086px;">400,00 €</div>
<div class="t" style="left:480.40px;top:484px;font-size:13px;line-height:13px;letter-spacing:0.164px;">Kapitel "Konfiguration"</div>
<div class="t" style="left:49.80px;top:505px;font-size:12.5px;line-height:12.5px;letter-spacing:-0.056px;">28.07.2018</div>
<div class="t" style="left:124.60px;top:504px;font-size:13px;line-height:13px;letter-spacing:-0.242px;">08:00 - 16:00</div>
<div class="t" style="left:207.60px;top:505px;font-size:10px;line-height:10px;letter-spacing:-0.850px;color:#7a7a7a;">(N)</div>
<div class="t" style="left:364.40px;top:505px;font-size:12.5px;line-height:12.5px;letter-spacing:-0.300px;">8:00</div>
<div class="t" style="left:419.40px;top:505px;font-size:12.5px;line-height:12.5px;letter-spacing:-0.086px;">400,00 €</div>
<div class="t" style="left:480.40px;top:504px;font-size:13px;line-height:13px;letter-spacing:0.164px;">Kapitel "Konfiguration"</div>
<svg class="a" style="left:0;top:0" width="843" height="519" viewBox="0 0 843 519">
<defs><filter id="sh" x="-20%" y="-20%" width="140%" height="140%"><feGaussianBlur stdDeviation="2"/></filter></defs>
<g opacity="0.45" filter="url(#sh)" transform="translate(3,4)"><path d="M664 280 L741 334" stroke="#000" stroke-width="5"/><path d="M751 341 L744 326.5 L735 339.5 Z" fill="#000"/></g>
<path d="M664 280 L741 334" stroke="#c00000" stroke-width="4.1" stroke-linecap="butt"/>
<path d="M752 341.5 L744 326 L734 340 Z" fill="#c00000"/>
</svg>
<svg class="a" style="left:195px;top:96px" width="48" height="50" viewBox="0 0 48 50">
<defs><filter id="sh2" x="-50%" y="-50%" width="200%" height="200%"><feGaussianBlur stdDeviation="2.8"/></filter></defs>
<path d="M18.6 16.1 L6.9 5.5 L16.0 18.3 ZM19.0 17.3 L18.2 5.9 L15.6 17.1 ZM18.4 18.5 L29.9 5.9 L16.2 15.9 ZM17.4 18.9 L37.7 15.4 L17.2 15.5 ZM16.9 18.8 L38.6 22.8 L17.7 15.6 ZM17.3 15.5 L6.1 17.4 L17.3 18.9 ZM16.3 15.8 L5.2 25.4 L18.3 18.6 ZM15.8 16.5 L10.4 32.4 L18.8 17.9 Z" fill="#f4b000" stroke="#e8a000" stroke-width="0.6" stroke-linejoin="round"/>
<circle cx="17.3" cy="17.2" r="2.2" fill="#b8c060"/>
<ellipse cx="34" cy="15" rx="5" ry="6" fill="#000" opacity="0.3" filter="url(#sh2)"/><path d="M20 22 L21 44 L26 40 L30 48 L35 46 L31 38 L39 37 Z" fill="#000" opacity="0.5" filter="url(#sh2)"/>
<path d="M17.2 18 L17.8 39 L22 35 L25.5 42.5 L28.8 41 L25.5 33.8 L31.5 33.5 Z" fill="#fff" stroke="#000" stroke-width="1.2" stroke-linejoin="round"/>
</svg>
</body></html>
